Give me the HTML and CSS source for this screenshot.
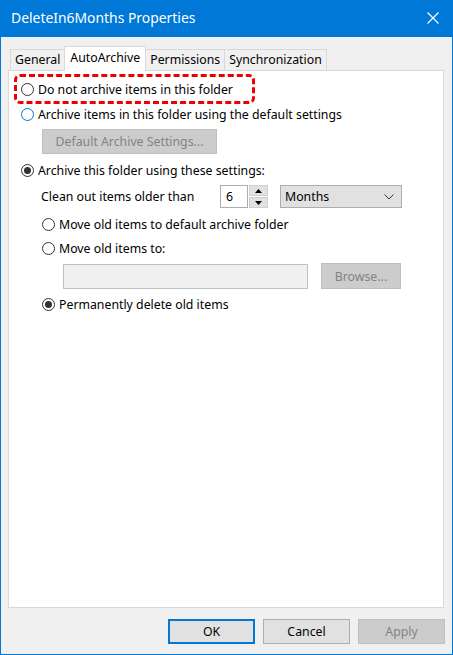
FILE: index.html
```html
<!DOCTYPE html>
<html>
<head>
<meta charset="utf-8">
<link rel="stylesheet" href="styles.css">
</head>
<body>
<div class="window">
  <div class="titlebar">
    <span class="title">DeleteIn6Months Properties</span>
    <svg class="close" width="12" height="12" viewBox="0 0 12 12"><path d="M0.5 0.5 L11.5 11.5 M11.5 0.5 L0.5 11.5" stroke="#fff" stroke-width="1.2" fill="none"/></svg>
  </div>
  <div class="body">
    <div class="tabs">
      <div class="tab first">General</div>
      <div class="tab active">AutoArchive</div>
      <div class="tab">Permissions</div>
      <div class="tab">Synchronization</div>
    </div>
    <div class="panel">
      <div class="highlight">
        <label class="row"><span class="radio"></span><span>Do not archive items in this folder</span></label>
      </div>
      <label class="row"><span class="radio focus"></span><span>Archive items in this folder using the default settings</span></label>
      <div class="btn disabled defbtn">Default Archive Settings...</div>
      <label class="row r3"><span class="radio checked"></span><span>Archive this folder using these settings:</span></label>
      <div class="clean">
        <span class="clean-label">Clean out items older than</span>
        <div class="spin">
          <div class="spin-input">6</div>
          <div class="spin-btns">
            <div class="spin-btn"><svg width="7" height="4" viewBox="0 0 7 4"><path d="M0 4 L3.5 0 L7 4Z" fill="#000"/></svg></div>
            <div class="spin-btn"><svg width="7" height="4" viewBox="0 0 7 4"><path d="M0 0 L3.5 4 L7 0Z" fill="#000"/></svg></div>
          </div>
        </div>
        <div class="select"><span>Months</span><svg width="10" height="6" viewBox="0 0 10 6"><path d="M0.5 0.5 L5 5 L9.5 0.5" stroke="#333" stroke-width="1" fill="none"/></svg></div>
      </div>
      <label class="row sub s1"><span class="radio"></span><span>Move old items to default archive folder</span></label>
      <label class="row sub s2"><span class="radio"></span><span>Move old items to:</span></label>
      <div class="pathrow">
        <div class="path"></div>
        <div class="btn disabled browse">Browse...</div>
      </div>
      <label class="row sub s3"><span class="radio checked"></span><span>Permanently delete old items</span></label>
    </div>
    <div class="footer">
      <div class="btn ok">OK</div>
      <div class="btn">Cancel</div>
      <div class="btn disabled">Apply</div>
    </div>
  </div>
</div>
</body>
</html>
```
FILE: styles.css
```css
* { box-sizing: border-box; }
html, body { margin: 0; padding: 0; background: #fff; }
body { font-family: "Noto Sans", "Segoe UI", sans-serif; font-size: 12.3px; color: #000; }

.window {
  width: 453px;
  height: 655px;
  border: 1px solid #0078d7;
  display: flex;
  flex-direction: column;
  background: #f0f0f0;
}
.titlebar {
  height: 37px;
  background: #0078d7;
  color: #fff;
  display: flex;
  align-items: center;
  justify-content: space-between;
  padding: 0 14px 0 11px;
  margin: -1px -1px 0 -1px;
}
.title { font-size: 13.9px; line-height: 20px; margin-top: -1px; }
.close { display: block; margin-top: -1px; }

.body { flex: 1; display: flex; flex-direction: column; padding: 0 8px 0 7px; }

.tabs { display: flex; margin-top: 9px; padding-left: 2px; height: 24px; align-items: flex-end; position: relative; z-index: 1; }
.tab {
  height: 21px;
  border: 1px solid #d9d9d9;
  border-bottom: none;
  background: #f0f0f0;
  padding: 0 4px;
  line-height: 19px;
  margin-left: -1px;
  color: #000;
}
.tab.first { margin-left: 0; }
.tab.active {
  height: 25px;
  background: #fff;
  margin-bottom: -1px;
  padding: 0 5px;
  line-height: 21px;
}

.panel {
  height: 538px;
  background: #fff;
  border: 1px solid #d9d9d9;
  padding: 3px 0 0 0;
  display: flex;
  flex-direction: column;
  align-items: flex-start;
}

.highlight {
  margin-left: 5px;
  width: 241px;
  height: 30px;
  border: 3px dashed #ee0000;
  border-radius: 6px;
  padding: 2px 0 0 4px;
}

.row { display: flex; align-items: center; height: 20px; padding-left: 12px; white-space: nowrap; }
.highlight .row { padding-left: 0; }
.radio {
  width: 13px; height: 13px;
  border: 1px solid #333;
  border-radius: 50%;
  background: #fff;
  margin-right: 4px;
  flex: none;
  display: flex; align-items: center; justify-content: center;
}
.radio.focus { border-color: #0078d7; }
.radio.checked::after {
  content: "";
  width: 7px; height: 7px;
  border-radius: 50%;
  background: #333;
}

.btn {
  height: 25px;
  width: 87px;
  border: 1px solid #adadad;
  background: #e1e1e1;
  display: flex; align-items: center; justify-content: center;
  white-space: nowrap;
}
.btn.disabled { background: #cccccc; border-color: #bfbfbf; color: #838383; }
.btn.ok { border: 2px solid #0078d7; }

.defbtn { width: 175px; margin: 5px 0 0 33px; }
.r3 { margin-top: 6px; }

.clean { display: flex; align-items: center; height: 23px; margin-top: 5px; padding-left: 32px; }
.clean-label { width: 179px; }
.spin { display: flex; height: 23px; }
.spin-input {
  width: 28px; height: 23px;
  border: 1px solid #adadad;
  padding-left: 5px;
  line-height: 21px;
}
.spin-btns { display: flex; flex-direction: column; justify-content: space-between; margin-left: 1px; width: 19px; }
.spin-btn {
  height: 11px; background: #e1e1e1; border: 1px solid #d0d0d0;
  display: flex; align-items: center; justify-content: center;
}
.select {
  margin-left: 12px;
  width: 122px; height: 23px;
  background: #e1e1e1;
  border: 1px solid #adadad;
  display: flex; align-items: center; justify-content: space-between;
  padding: 0 7px 0 4px;
}

.sub { padding-left: 33px; }
.s1 { margin-top: 6px; }
.s2 { margin-top: 4px; }
.s3 { margin-top: 5px; }

.pathrow { display: flex; align-items: center; margin-top: 5px; padding-left: 54px; height: 26px; }
.path { width: 245px; height: 25px; background: #f0f0f0; border: 1px solid #b9c3cc; }
.browse { width: 80px; height: 26px; margin-left: 13px; }

.footer { display: flex; justify-content: flex-end; gap: 8px; margin-top: 11px; margin-right: -1px; }
```
